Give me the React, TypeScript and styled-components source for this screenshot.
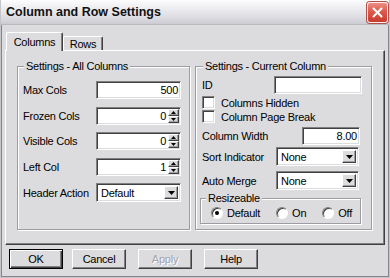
import React from 'react';
import styled, { createGlobalStyle } from 'styled-components';

const face = '#dcdcdf';

const GlobalStyle = createGlobalStyle`
  html, body {
    margin: 0;
    padding: 0;
  }
  body {
    background: ${face};
    font-family: "Liberation Sans", Arial, sans-serif;
    font-size: 11px;
    letter-spacing: -0.25px;
    color: #000;
  }
  * {
    box-sizing: border-box;
  }
`;

const Window = styled.div`
  width: 390px;
  height: 278px;
  display: flex;
  flex-direction: column;
  background: ${face};
  border: 1px solid #c4c4c9;
  border-top: 0;
  box-shadow: inset 1px 0 0 #85858b, inset -1px 0 0 #85858b, inset 0 -1px 0 #85858b;
`;

const TitleBar = styled.div`
  flex: none;
  height: 25px;
  display: flex;
  align-items: center;
  justify-content: space-between;
  padding: 0 1px 0 5px;
  background: linear-gradient(#fcfcfd 0%, #ededf1 35%, #d8d8de 80%, #cbcbd2 100%);
  border-bottom: 1px solid #b9b9c0;
`;

const Title = styled.div`
  font-weight: bold;
  font-size: 12.5px;
  letter-spacing: 0;
  color: #111;
`;

const CloseButton = styled.div`
  width: 21px;
  height: 21px;
  border-radius: 3px;
  border: 1px solid #fbeaea;
  box-shadow: 0 0 0 1px #b0504a;
  background: linear-gradient(#ec8f84 0%, #dc5a4c 45%, #c83b2e 100%);
  display: flex;
  align-items: center;
  justify-content: center;
`;

const Body = styled.div`
  flex: 1;
  display: flex;
  flex-direction: column;
  padding: 7px 4px 0 4px;
`;

const TabRow = styled.div`
  height: 18px;
  display: flex;
  align-items: flex-end;
  padding-left: 1px;
`;

const Tab = styled.div<{ $active?: boolean }>`
  position: relative;
  z-index: ${(p) => (p.$active ? 1 : 0)};
  width: ${(p) => (p.$active ? 57 : 40)}px;
  height: ${(p) => (p.$active ? 19 : 14)}px;
  margin-bottom: ${(p) => (p.$active ? -1 : 0)}px;
  display: flex;
  align-items: center;
  justify-content: center;
  background: ${face};
  border-top: 1px solid #fff;
  border-left: 1px solid #fff;
  border-right: 1px solid #404040;
  border-radius: 2px 2px 0 0;
  box-shadow: inset -1px 0 0 #808080;
`;

const Panel = styled.div`
  height: 195px;
  display: flex;
  gap: 5px;
  padding: 9px 0 0 11px;
  border-top: 1px solid #fff;
  border-left: 1px solid #fff;
  border-right: 1px solid #404040;
  border-bottom: 1px solid #404040;
  box-shadow: inset -1px -1px 0 #808080;
`;

const GroupBox = styled.fieldset<{ $w: number; $h: number; $pt: number; $pl: number; $pr: number; $mt?: number }>`
  margin: ${(p) => p.$mt ?? 0}px 0 0 0;
  min-width: 0;
  width: ${(p) => p.$w}px;
  height: ${(p) => p.$h}px;
  padding: ${(p) => `${p.$pt}px ${p.$pr}px 0 ${p.$pl}px`};
  border: 1px solid #9c9ca2;
  box-shadow: inset 1px 1px 0 #fff, 1px 1px 0 #fff;
`;

const Legend = styled.legend<{ $ml: number }>`
  padding: 0 2px;
  margin-left: ${(p) => p.$ml}px;
  line-height: 13px;
  background: ${face};
`;

const FormGrid = styled.div`
  display: grid;
  grid-template-columns: 73px 85px;
  row-gap: 7.5px;
  align-items: center;
`;

const Stack = styled.div`
  display: flex;
  flex-direction: column;
`;

const Row = styled.div<{ $h: number; $mt: number }>`
  height: ${(p) => p.$h}px;
  margin-top: ${(p) => p.$mt}px;
  display: flex;
  align-items: center;
`;

const Label = styled.span`
  flex: 1;
  padding-left: 2px;
  white-space: nowrap;
`;

const Field = styled.div<{ $w?: number; $h: number; $mr?: number; $spin?: boolean }>`
  width: ${(p) => (p.$w ? `${p.$w}px` : 'auto')};
  height: ${(p) => p.$h}px;
  margin-right: ${(p) => p.$mr ?? 0}px;
  display: flex;
  align-items: center;
  justify-content: flex-end;
  padding: ${(p) => (p.$spin ? '1px 0 1px 3px' : '0 2px 0 3px')};
  background: #fff;
  border: 1px solid;
  border-color: #808080 #fff #fff #808080;
  box-shadow: inset 1px 1px 0 #404040, inset -1px -1px 0 ${face};
`;

const FieldText = styled.span<{ $gap?: number }>`
  margin-right: ${(p) => p.$gap ?? 0}px;
`;

const Spinner = styled.div`
  width: 11px;
  height: 100%;
  margin-right: 1px;
  display: flex;
  flex-direction: column;
`;

const SpinHalf = styled.div`
  flex: 1;
  display: flex;
  align-items: center;
  justify-content: center;
  background: ${face};
  border: 1px solid;
  border-color: #fff #404040 #404040 #fff;
  box-shadow: inset -1px -1px 0 #a0a0a4;
`;

const Select = styled.div<{ $w?: number; $mr?: number }>`
  width: ${(p) => (p.$w ? `${p.$w}px` : 'auto')};
  height: 19px;
  margin-right: ${(p) => p.$mr ?? 0}px;
  display: flex;
  align-items: center;
  padding: 2px 2px 2px 4px;
  background: #fff;
  border: 1px solid;
  border-color: #808080 #fff #fff #808080;
  box-shadow: inset 1px 1px 0 #404040, inset -1px -1px 0 ${face};
`;

const SelectText = styled.span`
  flex: 1;
`;

const DropButton = styled.div`
  width: 14px;
  height: 100%;
  display: flex;
  align-items: center;
  justify-content: center;
  background: ${face};
  border: 1px solid;
  border-color: #fff #404040 #404040 #fff;
  box-shadow: inset -1px -1px 0 #a0a0a4;
`;

const CheckBox = styled.span`
  width: 13px;
  height: 13px;
  margin: 0 6px 0 2px;
  background: #fff;
  border: 1px solid;
  border-color: #808080 #fff #fff #808080;
  box-shadow: inset 1px 1px 0 #404040, inset -1px -1px 0 ${face};
`;

const RadioRow = styled.div`
  height: 13px;
  display: flex;
  align-items: center;
  gap: 16px;
`;

const RadioOption = styled.div`
  display: flex;
  align-items: center;
  gap: 4px;
`;

const RadioDot = styled.span<{ $checked?: boolean }>`
  width: 12px;
  height: 12px;
  border-radius: 50%;
  display: flex;
  align-items: center;
  justify-content: center;
  background: #fff;
  border: 1px solid;
  border-color: #808080 #fff #fff #808080;
  box-shadow: inset 1px 1px 0 #404040;

  &::after {
    content: '';
    width: 4px;
    height: 4px;
    border-radius: 50%;
    background: ${(p) => (p.$checked ? '#000' : 'transparent')};
  }
`;

const ButtonRow = styled.div`
  display: flex;
  gap: 12px;
  padding-left: 4px;
  margin-top: 4px;
`;

const DialogButton = styled.div<{ $default?: boolean; $disabled?: boolean }>`
  width: 54px;
  height: 20px;
  margin-right: ${(p) => (p.$default ? -3 : 0)}px;
  display: flex;
  align-items: center;
  justify-content: center;
  background: ${face};
  color: ${(p) => (p.$disabled ? '#a3a3a8' : '#000')};
  text-shadow: ${(p) => (p.$disabled ? '1px 1px 0 #fff' : 'none')};
  border: 1px solid;
  border-color: ${(p) => (p.$default ? '#000' : '#fff #404040 #404040 #fff')};
  box-shadow: ${(p) =>
    p.$default
      ? 'inset 1px 1px 0 #fff, inset -1px -1px 0 #404040, inset -2px -2px 0 #808080'
      : 'inset -1px -1px 0 #808080'};
`;

const Arrow = ({ up, w = 7, h = 4 }: { up?: boolean; w?: number; h?: number }) => (
  <svg width={w} height={h} viewBox={`0 0 ${w} ${h}`}>
    <path d={up ? `M0 ${h}H${w}L${w / 2} 0Z` : `M0 0H${w}L${w / 2} ${h}Z`} fill="#000" />
  </svg>
);

const SpinField = ({ value }: { value: string }) => (
  <Field $h={18} $spin>
    <FieldText $gap={2}>{value}</FieldText>
    <Spinner>
      <SpinHalf>
        <Arrow up w={5} h={3} />
      </SpinHalf>
      <SpinHalf>
        <Arrow w={5} h={3} />
      </SpinHalf>
    </Spinner>
  </Field>
);

const Dropdown = ({ value, w, mr }: { value: string; w?: number; mr?: number }) => (
  <Select $w={w} $mr={mr}>
    <SelectText>{value}</SelectText>
    <DropButton>
      <Arrow />
    </DropButton>
  </Select>
);

export default function App() {
  return (
    <>
      <GlobalStyle />
      <Window>
        <TitleBar>
          <Title>Column and Row Settings</Title>
          <CloseButton>
            <svg width="11" height="11" viewBox="0 0 11 11">
              <path d="M1.5 1.5L9.5 9.5M9.5 1.5L1.5 9.5" stroke="#fff" strokeWidth="2" strokeLinecap="round" />
            </svg>
          </CloseButton>
        </TitleBar>

        <Body>
          <TabRow>
            <Tab $active>Columns</Tab>
            <Tab>Rows</Tab>
          </TabRow>

          <Panel>
            <GroupBox $w={173} $h={170} $pt={8} $pl={5} $pr={8}>
              <Legend $ml={1}>Settings - All Columns</Legend>
              <FormGrid>
                <span>Max Cols</span>
                <Field $h={18}>
                  <FieldText>500</FieldText>
                </Field>
                <span>Frozen Cols</span>
                <SpinField value="0" />
                <span>Visible Cols</span>
                <SpinField value="0" />
                <span>Left Col</span>
                <SpinField value="1" />
                <span>Header Action</span>
                <Dropdown value="Default" />
              </FormGrid>
            </GroupBox>

            <GroupBox $w={177} $h={170} $pt={3} $pl={4} $pr={9}>
              <Legend $ml={3}>Settings - Current Column</Legend>
              <Stack>
                <Row $h={18} $mt={0}>
                  <Label>ID</Label>
                  <Field $w={88} $h={18} />
                </Row>
                <Row $h={13} $mt={2}>
                  <CheckBox />
                  <span>Columns Hidden</span>
                </Row>
                <Row $h={13} $mt={1}>
                  <CheckBox />
                  <span>Column Page Break</span>
                </Row>
                <Row $h={18} $mt={4}>
                  <Label>Column Width</Label>
                  <Field $w={58} $h={18} $mr={2}>
                    <FieldText>8.00</FieldText>
                  </Field>
                </Row>
                <Row $h={19} $mt={2}>
                  <Label>Sort Indicator</Label>
                  <Dropdown value="None" w={83} mr={3} />
                </Row>
                <Row $h={19} $mt={5}>
                  <Label>Auto Merge</Label>
                  <Dropdown value="None" w={83} mr={3} />
                </Row>
                <GroupBox $w={161} $h={32} $pt={1} $pl={10} $pr={4} $mt={2}>
                  <Legend $ml={-5}>Resizeable</Legend>
                  <RadioRow>
                    <RadioOption>
                      <RadioDot $checked />
                      <span>Default</span>
                    </RadioOption>
                    <RadioOption>
                      <RadioDot />
                      <span>On</span>
                    </RadioOption>
                    <RadioOption>
                      <RadioDot />
                      <span>Off</span>
                    </RadioOption>
                  </RadioRow>
                </GroupBox>
              </Stack>
            </GroupBox>
          </Panel>

          <ButtonRow>
            <DialogButton $default>OK</DialogButton>
            <DialogButton>Cancel</DialogButton>
            <DialogButton $disabled>Apply</DialogButton>
            <DialogButton>Help</DialogButton>
          </ButtonRow>
        </Body>
      </Window>
    </>
  );
}
